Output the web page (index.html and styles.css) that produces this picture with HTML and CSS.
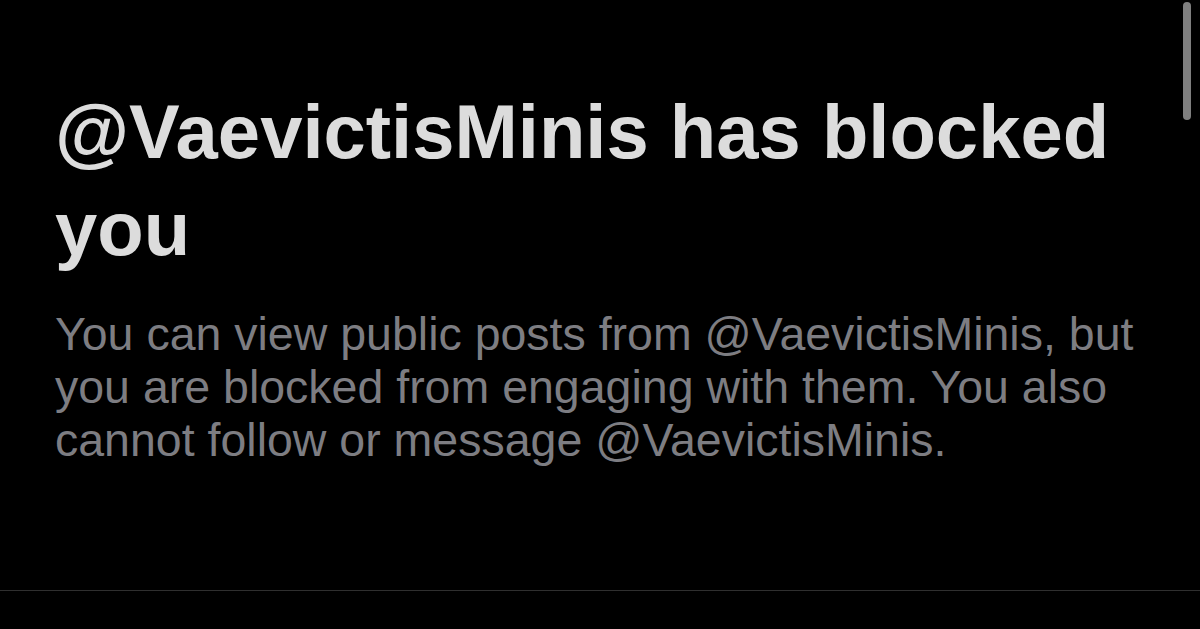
FILE: index.html
```html
<!DOCTYPE html>
<html lang="en">
<head>
    <meta charset="UTF-8">
    <meta name="viewport" content="width=device-width, initial-scale=1.0">
    <title>Blocked</title>
    <link rel="stylesheet" href="styles.css">
</head>
<body>
    <div class="screen">
        <div class="scrollbar"></div>

        <div class="blocked">
            <h1 class="blocked-title">@VaevictisMinis has blocked you</h1>
            <p class="blocked-text">You can view public posts from @VaevictisMinis, but you are blocked from engaging with them. You also cannot follow or message @VaevictisMinis.</p>
        </div>

        <div class="divider"></div>
    </div>
</body>
</html>
```

FILE: styles.css
```css
* {
    margin: 0;
    padding: 0;
    box-sizing: border-box;
    font-family: 'Liberation Sans', Arial, sans-serif;
}

body {
    background: #000;
    width: 1200px;
    height: 629px;
    overflow: hidden;
}

.screen {
    position: relative;
    height: 629px;
    display: flex;
    flex-direction: column;
}

.scrollbar {
    position: absolute;
    top: 2px;
    right: 9px;
    width: 8px;
    height: 118px;
    border-radius: 4px;
    background: #7f7f7f;
}

.blocked {
    padding: 83px 0 0 55px;
    width: 1150px;
    height: 590px;
}

.blocked-title {
    font-size: 76px;
    font-weight: bold;
    line-height: 97px;
    color: #dcdcdc;
}

.blocked-text {
    margin-top: 31px;
    font-size: 46.5px;
    line-height: 53px;
    color: #7d7d82;
}

.divider {
    height: 1px;
    background: #2f2f2f;
}
```
